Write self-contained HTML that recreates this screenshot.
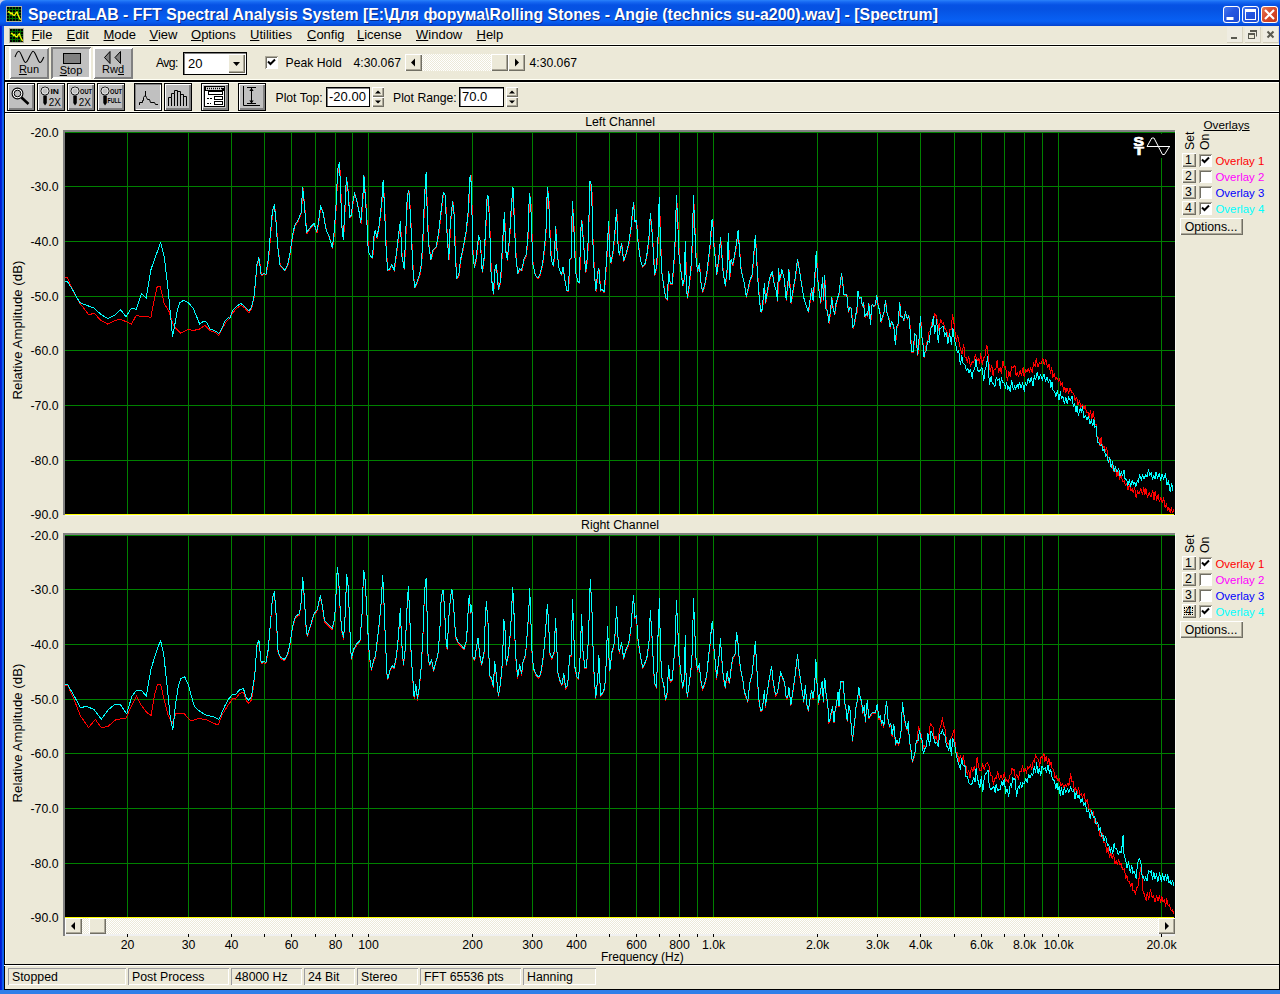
<!DOCTYPE html>
<html><head><meta charset="utf-8"><title>SpectraLAB</title><style>
html,body{margin:0;padding:0;}
body{width:1280px;height:994px;position:relative;overflow:hidden;background:#ECE9D8;font-family:"Liberation Sans",sans-serif;}
.a{position:absolute;box-sizing:border-box}
.t{position:absolute;white-space:nowrap;color:#000;font-size:12px;line-height:14px}
.ttl{color:#fff;font-weight:bold;font-size:15.85px;line-height:18px;text-shadow:1px 1px 0 #0a2a8a}
.m{font-size:13px;line-height:16px}
.tb{font-size:12.2px;line-height:15px}
.bl{font-size:11px;line-height:13px}
.ax{font-size:12.3px;line-height:14px}
#title{position:absolute;left:0;top:0;width:1280px;height:26px;background:linear-gradient(180deg,#2a82fa 0px,#1668f2 2px,#0652e4 5px,#0552e2 9px,#075cee 17px,#0860f4 21px,#0652e2 24px,#0440cc 26px)}
#lb{position:absolute;left:0;top:26px;width:4px;height:968px;background:linear-gradient(90deg,#0018d2 0,#0320d8 1.4px,#1162ec 2.6px,#0e60f0 4px)}
#rb{position:absolute;left:1279px;top:26px;width:1px;height:19px;background:#0a40d8}
#bb{position:absolute;left:0;top:990px;width:1280px;height:4px;background:#2f7fe8}
</style></head><body>
<div id="title"></div>
<div id="lb"></div><div id="rb"></div><div id="bb"></div>
<svg class="a" style="left:0;top:0" width="7" height="7"><path d="M0 0H6A6 6 0 0 0 0 6Z" fill="#c6ceee"/></svg>
<svg class="a" style="left:6px;top:6px" width="16" height="16" viewBox="0 0 16 16" shape-rendering="crispEdges"><rect width="16" height="16" fill="#b0b0a0"/><rect x="1" y="1" width="14" height="14" fill="#000"/><path d="M1 3.5H15M1 6.5H15M1 9.5H15M1 12.5H15M3.5 1V15M6.5 1V15M9.5 1V15M12.5 1V15" stroke="#006a00" stroke-width="1" fill="none"/><path d="M2 5.5L4 6.5L5 8L6 7L7 9L8.5 9.5L10 7L11 6L12 9L13.5 12L14.5 14" stroke="#f4f400" stroke-width="1.4" fill="none" shape-rendering="auto"/></svg>
<div class="t ttl" style="left:28px;top:6px;">SpectraLAB - FFT Spectral Analysis System [E:\Для форума\Rolling Stones - Angie (technics su-a200).wav] - [Spectrum]</div>
<div class="a" style="left:1223px;top:6px;width:17px;height:17px;border-radius:3.5px;background:linear-gradient(135deg,#4a7df0 0%,#2456e0 45%,#1c49d0 100%);box-shadow:inset 0 0 0 1px #fff;"><svg width="17" height="17" style="position:absolute;left:0;top:0"><rect x="3.5" y="11" width="7" height="3" fill="#fff"/></svg></div>
<div class="a" style="left:1242px;top:6px;width:17px;height:17px;border-radius:3.5px;background:linear-gradient(135deg,#4a7df0 0%,#2456e0 45%,#1c49d0 100%);box-shadow:inset 0 0 0 1px #fff;"><svg width="17" height="17" style="position:absolute;left:0;top:0"><rect x="3.5" y="3.5" width="10" height="10" fill="none" stroke="#fff" stroke-width="1"/><rect x="3" y="3" width="11" height="3" fill="#fff"/></svg></div>
<div class="a" style="left:1261px;top:6px;width:17px;height:17px;border-radius:3.5px;background:linear-gradient(135deg,#e8805a 0%,#d6482a 50%,#c03a1c 100%);box-shadow:inset 0 0 0 1px #fff;"><svg width="17" height="17" style="position:absolute;left:0;top:0"><path d="M4 4L13 13M13 4L4 13" stroke="#fff" stroke-width="2.2" fill="none"/></svg></div>
<div class="a" style="left:4px;top:26px;width:1275px;height:19px;background:#ECE9D8"></div>
<svg class="a" style="left:9px;top:28px" width="15" height="15" viewBox="0 0 16 16" shape-rendering="crispEdges"><rect width="16" height="16" fill="#b0b0a0"/><rect x="1" y="1" width="14" height="14" fill="#000"/><path d="M1 3.5H15M1 6.5H15M1 9.5H15M1 12.5H15M3.5 1V15M6.5 1V15M9.5 1V15M12.5 1V15" stroke="#006a00" stroke-width="1" fill="none"/><path d="M2 5.5L4 6.5L5 8L6 7L7 9L8.5 9.5L10 7L11 6L12 9L13.5 12L14.5 14" stroke="#f4f400" stroke-width="1.4" fill="none" shape-rendering="auto"/></svg>
<div class="t m" style="left:31.5px;top:27px;"><u>F</u>ile</div>
<div class="t m" style="left:66.5px;top:27px;"><u>E</u>dit</div>
<div class="t m" style="left:103.5px;top:27px;"><u>M</u>ode</div>
<div class="t m" style="left:149.5px;top:27px;"><u>V</u>iew</div>
<div class="t m" style="left:191px;top:27px;"><u>O</u>ptions</div>
<div class="t m" style="left:250px;top:27px;"><u>U</u>tilities</div>
<div class="t m" style="left:307px;top:27px;"><u>C</u>onfig</div>
<div class="t m" style="left:357px;top:27px;"><u>L</u>icense</div>
<div class="t m" style="left:416px;top:27px;"><u>W</u>indow</div>
<div class="t m" style="left:476.5px;top:27px;"><u>H</u>elp</div>
<div class="a" style="left:1227px;top:27px;width:15px;height:15px;background:#efede2;border-right:1px solid #d8d4c2;border-bottom:1px solid #d0ccb8;box-sizing:content-box"><svg width="15" height="15" style="position:absolute;left:0;top:0"><rect x="4" y="10" width="6" height="2" fill="#5a5a50"/></svg></div>
<div class="a" style="left:1245px;top:27px;width:15px;height:15px;background:#efede2;border-right:1px solid #d8d4c2;border-bottom:1px solid #d0ccb8;box-sizing:content-box"><svg width="15" height="15" style="position:absolute;left:0;top:0"><path d="M5.5 4.5H11.5V9.5" stroke="#5a5a50" stroke-width="1" fill="none"/><rect x="5" y="3" width="7" height="2" fill="#5a5a50"/><rect x="3.5" y="7.500" width="6" height="4" fill="#ece9d8" stroke="#5a5a50" stroke-width="1"/><rect x="3" y="6" width="7" height="2" fill="#5a5a50"/></svg></div>
<div class="a" style="left:1263px;top:27px;width:15px;height:15px;background:#efede2;border-right:1px solid #d8d4c2;border-bottom:1px solid #d0ccb8;box-sizing:content-box"><svg width="15" height="15" style="position:absolute;left:0;top:0"><path d="M4.5 4.5L10.5 10.500M10.5 4.5L4.500 10.5" stroke="#5a5a50" stroke-width="2" fill="none"/></svg></div>
<div class="a" style="left:4px;top:44px;width:1275px;height:1px;background:#fffff4"></div>
<div class="a" style="left:4px;top:46px;width:1275px;height:1px;background:#fffff4"></div>
<div class="a" style="left:4px;top:79px;width:1275px;height:1px;background:#fffff4"></div>
<div class="a" style="left:4px;top:82px;width:1275px;height:1px;background:#fffff4"></div>
<div class="a" style="left:4px;top:111px;width:1275px;height:1px;background:#fffff4"></div>
<div class="a" style="left:4px;top:113px;width:1275px;height:1px;background:#fffff4"></div>
<div class="a" style="left:5px;top:46px;width:1px;height:918px;background:#fffff4"></div>
<div class="a" style="left:4px;top:45px;width:1px;height:945px;background:#000"></div>
<div class="a" style="left:4px;top:45px;width:1276px;height:1px;background:#000"></div>
<div class="a" style="left:4px;top:80px;width:1276px;height:2px;background:#000"></div>
<div class="a" style="left:4px;top:112px;width:1276px;height:1px;background:#000"></div>
<div class="a" style="left:1279px;top:45px;width:1px;height:945px;background:#000"></div>
<div class="a" style="left:4px;top:964px;width:1276px;height:1px;background:#000"></div>
<div class="a" style="left:4px;top:965px;width:1275px;height:1px;background:#fff"></div>
<div class="a" style="left:4px;top:989px;width:1276px;height:1px;background:#000"></div>
<div class="a" style="left:9px;top:47px;width:40px;height:32px;background:#c0c0c0;box-shadow:inset 1px 1px 0 #fff, inset -1px -1px 0 #808080, inset 2px 2px 0 #fff, inset -2px -2px 0 #808080;"><svg width="40" height="31" style="position:absolute;left:0;top:0"><path d="M6 10C7.5 6 8.5 4.200 9.800 4.200C12 4.200 14.500 15.500 16.600 15.500C19 15.500 22 4.200 24.100 4.200C26.500 4.200 29 15.500 31 15.500C32.500 15.500 33.500 13 34.800 10" stroke="#000" stroke-width="1.1" fill="none"/></svg><div class="t bl" style="left:0;width:40px;top:16px;text-align:center"><u>R</u>un</div></div>
<div class="a" style="left:51px;top:47px;width:40px;height:32px;background:#c0c0c0;box-shadow:inset 1px 1px 0 #808080, inset -1px -1px 0 #fff, inset 2px 2px 0 #808080, inset -2px -2px 0 #fff;"><svg width="40" height="31" style="position:absolute;left:0;top:0"><rect x="12.5" y="6.500" width="17" height="10" fill="#808080" stroke="#000" stroke-width="1"/></svg><div class="t bl" style="left:0;width:40px;top:17px;text-align:center"><u>S</u>top</div></div>
<div class="a" style="left:93px;top:47px;width:40px;height:32px;background:#c0c0c0;box-shadow:inset 1px 1px 0 #fff, inset -1px -1px 0 #808080, inset 2px 2px 0 #fff, inset -2px -2px 0 #808080;"><svg width="40" height="31" style="position:absolute;left:0;top:0"><path d="M17 4.500L11.500 10.500L17 16.500ZM27.500 4.500L22 10.500L27.500 16.500Z" fill="#808080" stroke="#000" stroke-width="1"/></svg><div class="t bl" style="left:0;width:40px;top:16px;text-align:center">Rw<u>d</u></div></div>
<div class="t tb" style="left:156px;top:56px;letter-spacing:-0.6px">Avg:</div>
<div class="a" style="left:183px;top:52px;width:64px;height:23px;background:#fff;border:1px solid #000;box-sizing:border-box;box-shadow:inset 1px 1px 0 #808080"></div>
<div class="t tb" style="left:188px;top:56px;font-size:13px">20</div>
<div class="a" style="left:228px;top:54px;width:17px;height:19px;background:#ECE9D8;box-shadow:inset 1px 1px 0 #fff, inset -1px -1px 0 #6d6a5a, inset -2px -2px 0 #aca899"><svg width="17" height="19" style="position:absolute;left:0;top:0"><path d="M5 8H12L8.500 12Z" fill="#000"/></svg></div>
<div class="a" style="left:265px;top:56px;width:13px;height:13px;background:#fff;box-shadow:inset 1px 1px 0 #aca899, inset -1px -1px 0 #fff, inset 2px 2px 0 #716f64, inset -2px -2px 0 #fff"><svg width="13" height="13" style="position:absolute;left:0;top:0"><path d="M3 5.500L5.500 8L10 3.500" stroke="#000" stroke-width="2" fill="none"/></svg></div>
<div class="t tb" style="left:285.5px;top:56px;">Peak Hold</div>
<div class="t tb" style="left:353.5px;top:56px;">4:30.067</div>
<div class="t tb" style="left:529.5px;top:56px;">4:30.067</div>
<div class="a" style="left:422px;top:54px;width:86px;height:17px;background:repeating-conic-gradient(#ffffff 0% 25%, #ece9d8 0% 50%) 0 0/2px 2px"></div>
<div class="a" style="left:405px;top:54px;width:17px;height:17px;background:#ECE9D8;box-shadow:inset 1px 1px 0 #fff, inset -1px -1px 0 #716f64, inset -2px -2px 0 #aca899"><svg width="17" height="17" style="position:absolute;left:0;top:0"><path d="M10.0 4.5V12.5L6.0 8.5Z" fill="#000"/></svg></div>
<div class="a" style="left:491px;top:54px;width:17px;height:17px;background:#ECE9D8;box-shadow:inset 1px 1px 0 #fff, inset -1px -1px 0 #716f64, inset -2px -2px 0 #aca899"></div>
<div class="a" style="left:508px;top:54px;width:17px;height:17px;background:#ECE9D8;box-shadow:inset 1px 1px 0 #fff, inset -1px -1px 0 #716f64, inset -2px -2px 0 #aca899"><svg width="17" height="17" style="position:absolute;left:0;top:0"><path d="M7.0 4.5V12.5L11.0 8.5Z" fill="#000"/></svg></div>
<div class="a" style="left:7px;top:83px;width:28px;height:28px;background:#000"></div>
<div class="a" style="left:8px;top:84px;width:26px;height:26px;background:#c0c0c0;box-shadow:inset 1px 1px 0 #fff, inset -1px -1px 0 #808080, inset -2px -2px 0 #808080;"><svg width="26" height="26" style="position:absolute;left:0;top:0"><circle cx="9.5" cy="9.500" r="5.4" fill="#fff" stroke="#000" stroke-width="1.1"/><circle cx="9.500" cy="9.5" r="3.3" fill="#c0c0c0" stroke="#000" stroke-width="1"/><path d="M13.500 13.500L20.500 20" stroke="#000" stroke-width="2.6" fill="none"/></svg></div>
<div class="a" style="left:37px;top:83px;width:28px;height:28px;background:#000"></div>
<div class="a" style="left:38px;top:84px;width:26px;height:26px;background:#c0c0c0;box-shadow:inset 1px 1px 0 #fff, inset -1px -1px 0 #808080, inset -2px -2px 0 #808080;"><svg width="26" height="26" style="position:absolute;left:0;top:0"><circle cx="7" cy="7" r="4" fill="#c0c0c0" stroke="#000" stroke-width="1"/><circle cx="7" cy="7" r="3.2" fill="none" stroke="#fff" stroke-width="0.7"/><path d="M5.300 11.500H8.800V19L7 21.500L5.300 19Z" fill="#000"/><text x="12.5" y="10" font-family="Liberation Sans, sans-serif" font-weight="bold" font-size="6.5" fill="#000" textLength="8.5" lengthAdjust="spacingAndGlyphs">IN</text><text x="10.8" y="21.5" font-family="Liberation Sans, sans-serif" font-size="11"  fill="#000" textLength="12" lengthAdjust="spacingAndGlyphs">2X</text></svg></div>
<div class="a" style="left:67px;top:83px;width:28px;height:28px;background:#000"></div>
<div class="a" style="left:68px;top:84px;width:26px;height:26px;background:#c0c0c0;box-shadow:inset 1px 1px 0 #fff, inset -1px -1px 0 #808080, inset -2px -2px 0 #808080;"><svg width="26" height="26" style="position:absolute;left:0;top:0"><circle cx="7" cy="7" r="4" fill="#c0c0c0" stroke="#000" stroke-width="1"/><circle cx="7" cy="7" r="3.2" fill="none" stroke="#fff" stroke-width="0.7"/><path d="M5.300 11.500H8.800V19L7 21.500L5.300 19Z" fill="#000"/><text x="12" y="10" font-family="Liberation Sans, sans-serif" font-weight="bold" font-size="6.5" fill="#000" textLength="12" lengthAdjust="spacingAndGlyphs">OUT</text><text x="10.8" y="21.5" font-family="Liberation Sans, sans-serif" font-size="11"  fill="#000" textLength="12" lengthAdjust="spacingAndGlyphs">2X</text></svg></div>
<div class="a" style="left:97px;top:83px;width:28px;height:28px;background:#000"></div>
<div class="a" style="left:98px;top:84px;width:26px;height:26px;background:#c0c0c0;box-shadow:inset 1px 1px 0 #fff, inset -1px -1px 0 #808080, inset -2px -2px 0 #808080;"><svg width="26" height="26" style="position:absolute;left:0;top:0"><circle cx="7" cy="7" r="4" fill="#c0c0c0" stroke="#000" stroke-width="1"/><circle cx="7" cy="7" r="3.2" fill="none" stroke="#fff" stroke-width="0.7"/><path d="M5.300 11.500H8.800V19L7 21.500L5.300 19Z" fill="#000"/><text x="12" y="10" font-family="Liberation Sans, sans-serif" font-weight="bold" font-size="6.5" fill="#000" textLength="12" lengthAdjust="spacingAndGlyphs">OUT</text><text x="9.5" y="18.8" font-family="Liberation Sans, sans-serif" font-size="7" font-weight='bold' fill="#000" textLength="13.5" lengthAdjust="spacingAndGlyphs">FULL</text></svg></div>
<div class="a" style="left:134px;top:83px;width:28px;height:28px;background:#000"></div>
<div class="a" style="left:135px;top:84px;width:26px;height:26px;background:#c0c0c0;box-shadow:inset 1px 1px 0 #808080, inset -1px -1px 0 #fff;"><svg width="26" height="26" style="position:absolute;left:0;top:0"><path d="M4.500 21V18.500H7.500V16.500H8.500V13.500L10 11.500M10.500 7V12.500M10.500 11.500L11.500 13.500L12.500 15.500H14.500L15.500 18.500H19.500L20.500 20.500H23" stroke="#000" stroke-width="1" fill="none"/></svg></div>
<div class="a" style="left:164px;top:83px;width:28px;height:28px;background:#000"></div>
<div class="a" style="left:165px;top:84px;width:26px;height:26px;background:#c0c0c0;box-shadow:inset 1px 1px 0 #fff, inset -1px -1px 0 #808080, inset -2px -2px 0 #808080;"><svg width="26" height="26" style="position:absolute;left:0;top:0"><path d="M3.500 22V13.500H6.500V22M6.500 13.500V9.500H9.500V22M9.500 9.500V6.500H12.500V22M12.500 7.500H15.500V22M15.500 10.500H18.500V22M18.500 12.500H21.500V22" stroke="#000" stroke-width="1" fill="none"/></svg></div>
<div class="a" style="left:201px;top:83px;width:28px;height:28px;background:#000"></div>
<div class="a" style="left:202px;top:84px;width:26px;height:26px;background:#c0c0c0;box-shadow:inset 1px 1px 0 #fff, inset -1px -1px 0 #808080, inset -2px -2px 0 #808080;"><svg width="26" height="26" style="position:absolute;left:0;top:0"><rect x="2.5" y="2.500" width="20" height="20" fill="#fff" stroke="#000" stroke-width="1"/><path d="M3 6.500H22" stroke="#000" stroke-width="1"/><rect x="3" y="3" width="19" height="3" fill="#d8d8d8"/><path d="M5 4.500H20" stroke="#000" stroke-width="1.4" stroke-dasharray="1 1"/><rect x="3" y="3" width="1" height="3" fill="#000"/><rect x="20" y="4" width="2" height="2" fill="#000"/><rect x="6.500" y="7.500" width="14" height="3" fill="#fff" stroke="#000"/><rect x="12.5" y="12.500" width="8" height="3" fill="#fff" stroke="#000"/><rect x="12.500" y="17.500" width="8" height="3" fill="#fff" stroke="#000"/><path d="M5 14.500H10M5 19.500H9" stroke="#000" stroke-width="1" stroke-dasharray="2 1"/></svg></div>
<div class="a" style="left:238px;top:83px;width:28px;height:28px;background:#000"></div>
<div class="a" style="left:239px;top:84px;width:26px;height:26px;background:#c0c0c0;box-shadow:inset 1px 1px 0 #fff, inset -1px -1px 0 #808080, inset -2px -2px 0 #808080;"><svg width="26" height="26" style="position:absolute;left:0;top:0"><path d="M4.500 2V21.500H21" stroke="#000" stroke-width="1" fill="none"/><path d="M8 3.500H17M8 19.500H17M12.500 4V19" stroke="#000" stroke-width="1" fill="none"/><path d="M10.300 7L12.500 4L14.700 7ZM10.300 16.500L12.500 19.500L14.700 16.500Z" fill="#000"/></svg></div>
<div class="t tb" style="left:275.5px;top:91px;">Plot Top:</div>
<div class="t tb" style="left:393px;top:91px;">Plot Range:</div>
<div class="a" style="left:326px;top:87px;width:44px;height:20px;background:#fff;border:1px solid #000;box-sizing:border-box;box-shadow:inset 1px 1px 0 #808080"><div class="t tb" style="left:2px;top:1px;font-size:13px">-20.00</div></div>
<div class="a" style="left:459px;top:87px;width:45px;height:20px;background:#fff;border:1px solid #000;box-sizing:border-box;box-shadow:inset 1px 1px 0 #808080"><div class="t tb" style="left:2px;top:1px;font-size:13px">70.0</div></div>
<div class="a" style="left:372px;top:87px;width:12px;height:10px;background:#ECE9D8;box-shadow:inset 1px 1px 0 #fff, inset -1px -1px 0 #716f64, inset -2px -2px 0 #aca899"><svg width="12" height="10" style="position:absolute;left:0;top:0"><path d="M3 6.500H9L6 3.500Z" fill="#000"/></svg></div>
<div class="a" style="left:372px;top:97px;width:12px;height:10px;background:#ECE9D8;box-shadow:inset 1px 1px 0 #fff, inset -1px -1px 0 #716f64, inset -2px -2px 0 #aca899"><svg width="12" height="10" style="position:absolute;left:0;top:0"><path d="M3 3.500H9L6 6.500Z" fill="#000"/></svg></div>
<div class="a" style="left:506px;top:87px;width:12px;height:10px;background:#ECE9D8;box-shadow:inset 1px 1px 0 #fff, inset -1px -1px 0 #716f64, inset -2px -2px 0 #aca899"><svg width="12" height="10" style="position:absolute;left:0;top:0"><path d="M3 6.500H9L6 3.500Z" fill="#000"/></svg></div>
<div class="a" style="left:506px;top:97px;width:12px;height:10px;background:#ECE9D8;box-shadow:inset 1px 1px 0 #fff, inset -1px -1px 0 #716f64, inset -2px -2px 0 #aca899"><svg width="12" height="10" style="position:absolute;left:0;top:0"><path d="M3 3.500H9L6 6.500Z" fill="#000"/></svg></div>
<div class="a" style="left:63px;top:130px;width:1112px;height:2px;background:#808080"></div>
<div class="a" style="left:63px;top:130px;width:2px;height:385px;background:#808080"></div>
<div class="a" style="left:1175px;top:131px;width:1px;height:384px;background:#f8f8f0"></div>
<div class="a" style="left:65px;top:515px;width:1110px;height:1px;background:#f4f4f4"></div>
<svg class="a" style="left:65px;top:132px" width="1110" height="383" viewBox="65 132 1110 383" shape-rendering="crispEdges"><rect x="65" y="132" width="1110" height="383" fill="#000"/><path d="M127.5 132V514M188.5 132V514M231.5 132V514M264.5 132V514M291.5 132V514M315.5 132V514M335.5 132V514M352.5 132V514M368.5 132V514M472.5 132V514M532.5 132V514M576.5 132V514M609.5 132V514M636.5 132V514M659.5 132V514M679.5 132V514M697.5 132V514M713.5 132V514M817.5 132V514M877.5 132V514M920.5 132V514M954.5 132V514M981.5 132V514M1004.5 132V514M1024.5 132V514M1042.5 132V514M1058.5 132V514M1161.5 132V514M65 132.5H1175M65 186.5H1175M65 241.5H1175M65 296.5H1175M65 350.5H1175M65 405.5H1175M65 460.5H1175" stroke="#008000" stroke-width="1" fill="none"/><path d="M65.0 277.3L67.3 277.3L72.8 290.2L79.8 303.4L83.8 308.1L88.4 314.4L94.7 313.6L100.9 320.6L108.0 324.2L115.0 320.3L120.5 319.4L127.5 322.2L131.4 324.2L136.1 315.6L141.6 316.4L150.9 317.2L154.1 300.3L157.2 286.6L160.3 286.6L164.2 303.4L168.9 311.2L172.8 323.8L175.9 328.4L180.6 333.1L188.4 329.2L193.1 330.5L199.4 329.2L204.8 325.3L210.3 330.8L215.0 332.3L218.9 335.5L222.0 329.2L225.9 322.2L229.1 319.1L232.2 313.6L236.1 308.9L240.8 305.3L244.7 307.8L249.1 313.1L251.7 308.1L254.1 297.2L255.9 278.4L256.9 266.4L259.2 258.6L261.6 275.8L263.9 274.2L266.2 275.0L268.6 260.2L270.9 232.1L272.8 211.0L274.7 205.5L276.4 224.2L278.0 247.7L280.3 265.6L285.0 271.1L288.1 264.9L290.5 252.4L292.8 236.0L295.1 225.8L298.3 221.1L301.4 213.3L303.0 188.3L304.5 203.9L306.9 233.6L310.0 228.9L314.4 224.2L317.0 232.8L318.6 224.2L320.9 206.3L323.3 213.3L326.4 230.5L329.5 237.5L332.6 248.5L334.2 235.2L336.2 208.6L337.5 180.5L338.4 168.0L339.7 163.3L340.9 189.9L342.0 225.8L343.6 239.9L345.1 210.2L346.7 178.1L348.3 191.4L350.1 218.0L351.7 215.6L353.0 203.9L354.8 193.8L356.9 200.8L359.2 211.7L361.1 223.5L363.1 197.7L364.2 176.6L365.5 196.1L367.0 219.6L368.6 252.4L370.9 257.1L372.8 258.6L374.4 235.2L375.6 231.3L377.2 238.3L379.5 225.8L381.9 203.9L383.4 181.3L384.7 205.5L386.2 244.6L387.8 271.1L390.0 269.6L392.0 264.9L394.4 271.1L396.7 253.9L399.1 233.6L400.6 222.7L402.2 257.1L404.5 269.6L406.1 232.1L407.6 196.1L409.2 191.4L410.8 218.0L412.3 250.8L413.4 272.7L415.0 288.3L417.8 282.1L420.1 274.2L421.7 264.9L423.3 235.2L424.8 197.7L426.4 173.5L427.2 203.9L428.7 243.0L431.1 260.2L433.4 250.8L436.6 247.7L438.9 233.6L441.2 213.3L443.6 193.0L445.6 196.1L446.7 224.2L449.1 260.2L450.6 222.7L453.0 202.4L454.5 216.4L455.5 253.9L457.0 278.9L459.1 275.8L460.9 260.2L463.3 249.2L466.4 232.1L468.7 210.2L470.0 178.9L471.1 175.8L472.2 210.2L473.1 253.9L474.7 268.0L476.6 258.6L478.9 236.7L480.5 241.4L482.5 272.7L484.4 258.6L486.2 222.7L487.5 196.1L488.7 197.7L490.3 238.3L491.4 275.8L493.7 294.6L495.0 271.1L496.6 264.9L498.7 289.9L500.8 282.1L502.8 244.6L504.7 213.3L505.9 250.8L507.5 260.2L509.7 239.9L511.7 205.5L513.3 188.3L514.8 228.9L516.4 260.2L518.0 274.2L520.0 269.6L521.9 271.1L524.2 260.2L526.5 255.5L528.1 238.3L529.7 194.6L530.9 200.8L532.0 233.6L533.1 264.9L535.6 275.8L538.3 278.9L540.6 274.2L543.0 263.3L545.0 246.1L546.5 227.4L547.6 188.3L548.9 197.7L550.3 238.3L551.5 260.2L553.4 266.4L554.7 257.1L555.9 227.4L557.2 250.8L559.0 268.0L561.7 275.8L563.3 268.0L565.3 282.1L567.2 291.4L568.7 291.4L570.0 260.2L571.5 258.6L572.6 202.4L574.2 228.9L575.8 272.7L578.1 282.1L579.7 283.6L580.9 232.1L582.0 221.1L584.0 247.7L585.9 272.7L587.8 257.1L589.0 222.7L590.3 182.1L591.9 186.7L593.0 238.3L594.5 272.7L596.1 291.4L598.1 272.7L599.2 269.6L600.8 291.4L602.3 289.9L604.4 293.0L606.2 269.6L607.8 244.6L608.9 222.7L610.1 257.1L611.2 263.3L613.3 252.4L615.6 227.4L616.9 210.2L618.0 241.4L619.5 255.5L621.9 244.6L623.9 261.7L626.5 253.9L628.9 244.6L631.2 228.9L632.8 211.7L633.9 203.1L635.1 222.7L636.7 221.1L638.3 243.0L640.6 260.2L642.5 266.4L642.8 267.4L645.5 264.2L647.5 253.3L649.4 236.1L650.6 214.2L652.2 231.4L653.7 253.3L654.8 275.2L656.9 267.4L658.4 236.1L659.5 197.8L660.6 237.7L661.9 272.1L664.2 287.7L665.8 298.6L667.6 300.2L668.9 272.1L670.5 284.6L672.5 284.6L674.0 264.2L675.6 237.7L676.7 196.3L678.0 222.1L679.4 258.0L681.4 273.6L683.0 286.1L684.5 279.9L685.6 242.4L686.5 284.6L687.6 298.6L689.2 287.7L691.2 268.9L692.8 237.7L693.7 196.3L695.1 229.9L696.2 258.0L697.8 272.1L699.7 264.2L700.9 281.4L702.8 292.4L704.8 286.1L706.9 275.2L708.7 259.6L710.6 243.9L711.9 222.1L713.0 220.5L714.2 247.1L715.8 261.1L716.9 275.2L718.9 261.1L720.8 238.5L722.0 254.9L723.6 275.2L725.6 286.1L727.5 268.9L728.6 233.8L729.8 279.9L731.4 259.6L733.0 265.8L735.3 253.3L737.2 240.8L738.4 230.6L739.7 250.2L741.2 268.9L743.1 278.3L744.7 284.6L746.5 297.1L748.1 290.8L750.1 281.4L752.5 275.2L754.4 250.2L755.6 236.1L756.9 259.6L758.4 284.6L759.5 298.6L761.1 312.7L762.6 309.6L764.7 284.6L765.8 303.3L767.8 290.8L769.7 279.9L772.5 272.1L774.4 284.6L776.7 292.4L777.8 301.7L778.7 268.9L779.8 281.4L782.2 270.5L784.5 279.9L786.5 300.2L788.1 284.6L789.2 270.5L791.2 303.3L793.1 292.4L795.5 278.3L797.8 260.3L799.4 268.9L801.7 284.6L804.0 298.6L806.4 306.4L808.7 312.7L810.6 298.6L811.9 289.2L813.4 301.7L815.0 278.3L816.5 252.5L817.8 278.3L819.4 292.4L820.9 303.3L822.8 278.3L823.9 300.2L824.8 276.0L826.2 303.3L826.3 310.2L827.7 311.1L829.1 323.6L830.6 312.8L832.0 298.3L833.6 311.0L834.9 314.9L836.5 302.9L837.6 299.8L839.3 294.0L840.8 281.4L841.8 274.2L842.9 282.3L844.1 295.2L845.4 295.1L847.1 295.0L848.6 312.6L850.2 308.0L851.4 308.6L853.2 328.5L854.7 324.6L855.9 314.6L857.0 313.4L858.3 292.2L859.6 299.0L861.3 297.8L862.5 306.6L863.8 303.1L865.2 317.4L866.7 314.5L867.9 316.5L869.1 304.3L870.7 325.0L871.9 306.3L873.0 305.0L874.1 307.0L875.5 305.7L877.1 296.5L878.6 307.4L879.9 311.0L881.1 322.4L882.8 317.3L884.5 311.8L885.8 301.0L887.3 314.0L889.1 318.7L890.3 328.2L891.6 322.7L892.6 323.4L894.1 327.4L895.6 345.0L897.0 327.8L898.3 325.1L900.0 303.6L901.2 317.7L902.8 317.6L904.0 321.0L905.7 312.7L907.5 319.2L909.0 316.4L910.0 324.8L911.8 352.7L913.4 352.1L915.0 334.5L916.3 335.5L917.8 355.5L919.0 345.0L920.7 317.4L921.9 336.2L923.1 343.1L924.3 357.7L925.0 352.9L926.5 342.8L927.7 342.5L929.1 331.2L930.4 331.7L931.7 322.9L932.9 326.9L934.5 313.9L936.3 316.0L937.5 320.5L938.9 330.5L940.5 319.2L942.2 323.5L943.4 322.7L945.2 329.1L946.8 330.9L948.2 339.3L949.9 329.7L951.1 330.1L952.5 314.9L953.6 320.1L955.1 332.4L956.3 341.3L957.7 335.2L959.0 342.1L960.6 350.3L962.0 353.9L963.7 344.5L965.1 357.7L966.2 357.8L967.3 362.1L968.7 356.4L970.5 366.4L972.1 361.8L973.6 363.0L975.4 354.6L977.0 360.9L978.4 358.4L979.5 363.8L980.7 353.6L982.3 364.4L983.6 357.5L984.8 357.5L986.6 345.0L987.6 348.6L988.7 362.0L990.3 371.5L991.7 365.2L993.1 375.4L994.2 369.0L995.8 369.2L997.1 360.3L998.5 372.4L1000.2 367.8L1001.3 373.4L1002.9 361.0L1004.5 367.7L1005.6 366.9L1007.3 380.6L1008.9 371.6L1010.3 376.7L1011.5 366.9L1013.2 367.6L1014.9 365.6L1016.1 376.2L1017.1 372.3L1018.6 376.7L1020.2 370.6L1021.5 375.8L1023.1 367.5L1024.1 376.4L1025.8 369.9L1027.0 371.6L1028.1 368.3L1029.3 372.3L1030.6 367.7L1032.3 372.4L1033.5 362.6L1035.1 366.5L1036.2 358.5L1037.9 367.2L1039.6 362.9L1041.4 363.6L1042.7 358.3L1044.2 364.3L1045.9 359.2L1047.6 367.5L1049.0 364.3L1050.5 373.3L1051.7 367.1L1052.7 377.2L1054.3 373.6L1055.7 379.4L1056.9 377.4L1058.5 381.6L1059.6 378.9L1060.9 385.4L1062.3 382.7L1063.7 391.2L1064.8 387.7L1066.0 392.4L1067.0 388.4L1068.7 393.1L1070.1 388.2L1071.9 392.8L1073.7 393.1L1075.2 400.5L1076.7 397.0L1077.8 405.0L1079.6 400.6L1080.9 407.5L1082.6 404.6L1084.0 409.0L1085.1 405.7L1086.5 412.5L1088.1 411.9L1089.3 417.1L1090.5 410.9L1091.7 419.1L1093.3 411.8L1095.0 424.4L1096.0 424.0L1097.1 436.8L1098.9 437.9L1099.9 445.8L1101.1 437.3L1102.5 448.1L1104.2 445.9L1105.5 451.8L1106.7 447.7L1107.8 457.3L1109.0 458.2L1110.6 464.5L1112.1 464.4L1113.7 471.8L1115.5 469.6L1117.0 476.4L1118.3 471.3L1119.6 479.5L1121.2 474.9L1122.5 481.8L1124.3 480.7L1125.6 486.0L1126.9 483.2L1128.0 489.8L1129.6 484.5L1131.0 490.8L1132.2 488.7L1133.3 492.8L1134.6 487.7L1136.2 498.0L1137.6 490.8L1139.1 494.0L1140.9 488.6L1142.5 494.8L1143.8 487.8L1144.9 494.8L1145.9 488.7L1147.5 497.8L1149.2 492.8L1150.9 497.2L1152.7 490.1L1154.0 499.6L1155.2 491.0L1156.7 500.7L1158.2 494.6L1159.4 502.0L1160.8 497.3L1162.4 502.8L1163.7 497.9L1165.1 507.3L1166.5 504.0L1167.8 510.4L1168.9 507.7L1170.2 513.0L1171.3 507.7L1172.6 513.0L1173.7 509.3" stroke="#ff0000" stroke-width="1" fill="none" stroke-linejoin="round"/><path d="M65.0 281.2L67.3 281.2L72.8 290.2L79.8 302.7L85.3 304.7L93.9 308.1L100.9 314.4L108.0 318.6L115.0 315.2L120.5 309.7L125.9 316.7L131.4 308.1L136.1 309.4L141.6 293.3L146.2 298.3L150.9 269.8L154.1 260.5L160.6 242.5L164.2 256.6L168.1 289.4L171.2 322.2L172.5 336.7L174.4 326.9L177.5 309.7L179.8 302.7L183.8 300.3L188.4 302.7L193.1 308.1L197.0 317.5L199.7 324.2L203.3 321.4L206.4 322.2L210.3 329.2L215.0 330.8L218.9 333.4L221.2 330.0L225.2 320.6L228.3 317.5L229.8 318.3L232.2 311.2L236.1 306.6L240.8 303.4L244.7 306.6L249.1 311.2L251.7 306.6L254.1 295.6L255.9 276.9L256.6 265.6L258.9 257.8L261.2 275.0L263.6 273.4L265.9 274.2L268.3 259.4L270.6 231.2L272.5 210.2L274.4 204.7L276.1 223.4L277.7 246.9L280.0 264.8L284.7 270.3L287.8 264.1L290.2 251.6L292.5 235.2L294.8 225.0L298.0 220.3L301.1 212.5L302.7 187.5L304.2 203.1L306.6 232.8L309.7 228.1L314.1 223.4L316.7 232.0L318.3 223.4L320.6 205.5L323.0 212.5L326.1 229.7L329.2 236.7L332.3 247.7L333.9 234.4L335.9 207.8L337.2 179.7L338.1 167.2L339.4 162.5L340.6 189.1L341.7 225.0L343.3 239.1L344.8 209.4L346.4 177.3L348.0 190.6L349.8 217.2L351.4 214.8L352.7 203.1L354.5 193.0L356.6 200.0L358.9 210.9L360.8 222.7L362.8 196.9L363.9 175.8L365.2 195.3L366.7 218.8L368.3 251.6L370.6 256.2L372.5 257.8L374.1 234.4L375.3 230.5L376.9 237.5L379.2 225.0L381.6 203.1L383.1 180.5L384.4 204.7L385.9 243.8L387.5 270.3L389.7 268.8L391.7 264.1L394.1 270.3L396.4 253.1L398.8 232.8L400.3 221.9L401.9 256.2L404.2 268.8L405.8 231.2L407.3 195.3L408.9 190.6L410.5 217.2L412.0 250.0L413.1 271.9L414.7 287.5L417.5 281.2L419.8 273.4L421.4 264.1L423.0 234.4L424.5 196.9L426.1 172.7L426.9 203.1L428.4 242.2L430.8 259.4L433.1 250.0L436.2 246.9L438.6 232.8L440.9 212.5L443.3 192.2L445.3 195.3L446.4 223.4L448.8 259.4L450.3 221.9L452.7 201.6L454.2 215.6L455.2 253.1L456.7 278.1L458.8 275.0L460.6 259.4L463.0 248.4L466.1 231.2L468.4 209.4L469.7 178.1L470.8 175.0L471.9 209.4L472.8 253.1L474.4 267.2L476.2 257.8L478.6 235.9L480.2 240.6L482.2 271.9L484.1 257.8L485.9 221.9L487.2 195.3L488.4 196.9L490.0 237.5L491.1 275.0L493.4 293.8L494.7 270.3L496.2 264.1L498.4 289.1L500.5 281.2L502.5 243.8L504.4 212.5L505.6 250.0L507.2 259.4L509.4 239.1L511.4 204.7L513.0 187.5L514.5 228.1L516.1 259.4L517.7 273.4L519.7 268.8L521.6 270.3L523.9 259.4L526.2 254.7L527.8 237.5L529.4 193.8L530.6 200.0L531.7 232.8L532.8 264.1L535.3 275.0L538.0 278.1L540.3 273.4L542.7 262.5L544.7 245.3L546.2 226.6L547.3 187.5L548.6 196.9L550.0 237.5L551.2 259.4L553.1 265.6L554.4 256.2L555.6 226.6L556.9 250.0L558.8 267.2L561.4 275.0L563.0 267.2L565.0 281.2L566.9 290.6L568.4 290.6L569.7 259.4L571.2 257.8L572.3 201.6L573.9 228.1L575.5 271.9L577.8 281.2L579.4 282.8L580.6 231.2L581.7 220.3L583.8 246.9L585.6 271.9L587.5 256.2L588.8 221.9L590.0 181.2L591.6 185.9L592.7 237.5L594.2 271.9L595.8 290.6L597.8 271.9L598.9 268.8L600.5 290.6L602.0 289.1L604.1 292.2L605.9 268.8L607.5 243.8L608.6 221.9L609.8 256.2L610.9 262.5L613.0 251.6L615.3 226.6L616.6 209.4L617.7 240.6L619.2 254.7L621.6 243.8L623.6 260.9L626.2 253.1L628.6 243.8L630.9 228.1L632.5 210.9L633.6 202.3L634.8 221.9L636.4 220.3L638.0 242.2L640.3 259.4L642.2 265.6L642.5 266.6L645.2 263.4L647.2 252.5L649.1 235.3L650.3 213.4L651.9 230.6L653.4 252.5L654.5 274.4L656.6 266.6L658.1 235.3L659.2 197.0L660.3 236.9L661.6 271.2L663.9 286.9L665.5 297.8L667.3 299.4L668.6 271.2L670.2 283.8L672.2 283.8L673.8 263.4L675.3 236.9L676.4 195.5L677.7 221.2L679.1 257.2L681.1 272.8L682.7 285.3L684.2 279.1L685.3 241.6L686.2 283.8L687.3 297.8L688.9 286.9L690.9 268.1L692.5 236.9L693.4 195.5L694.8 229.1L695.9 257.2L697.5 271.2L699.4 263.4L700.6 280.6L702.5 291.6L704.5 285.3L706.6 274.4L708.4 258.8L710.3 243.1L711.6 221.2L712.7 219.7L713.9 246.2L715.5 260.3L716.6 274.4L718.6 260.3L720.5 237.7L721.7 254.1L723.3 274.4L725.3 285.3L727.2 268.1L728.3 233.0L729.5 279.1L731.1 258.8L732.7 265.0L735.0 252.5L736.9 240.0L738.1 229.8L739.4 249.4L740.9 268.1L742.8 277.5L744.4 283.8L746.2 296.2L747.8 290.0L749.8 280.6L752.2 274.4L754.1 249.4L755.3 235.3L756.6 258.8L758.1 283.8L759.2 297.8L760.8 311.9L762.3 308.8L764.4 283.8L765.5 302.5L767.5 290.0L769.4 279.1L772.2 271.2L774.1 283.8L776.4 291.6L777.5 300.9L778.4 268.1L779.5 280.6L781.9 269.7L784.2 279.1L786.2 299.4L787.8 283.8L788.9 269.7L790.9 302.5L792.8 291.6L795.2 277.5L797.5 259.5L799.1 268.1L801.4 283.8L803.8 297.8L806.1 305.6L808.4 311.9L810.3 297.8L811.6 288.4L813.1 300.9L814.7 277.5L816.2 251.7L817.5 277.5L819.1 291.6L820.6 302.5L822.5 277.5L823.6 299.4L824.5 275.2L825.9 302.5L826.0 309.4L827.4 310.3L828.8 322.8L830.3 312.0L831.7 297.5L833.3 310.2L834.6 314.1L836.2 302.1L837.3 299.0L839.0 293.2L840.5 280.6L841.5 273.4L842.6 281.5L843.8 294.4L845.1 294.3L846.8 294.2L848.3 311.8L849.9 307.2L851.1 307.8L852.9 327.7L854.4 323.8L855.6 313.8L856.7 312.6L858.0 291.4L859.3 298.2L861.0 297.0L862.2 305.8L863.5 302.3L864.9 316.6L866.4 313.7L867.6 315.7L868.8 303.5L870.4 324.2L871.6 305.5L872.7 304.2L873.8 306.2L875.2 304.9L876.8 295.7L878.3 306.6L879.6 310.2L880.8 321.6L882.5 316.5L884.2 311.0L885.5 300.2L887.0 313.2L888.8 317.9L890.0 327.4L891.3 321.9L892.3 322.6L893.8 326.6L895.3 344.2L896.7 327.0L898.0 324.3L899.7 302.8L900.9 316.9L902.5 316.8L903.7 320.2L905.4 311.9L907.2 318.4L908.7 315.6L909.7 324.0L911.5 351.9L913.1 351.3L914.7 333.7L916.0 334.7L917.5 354.7L918.7 344.2L920.4 316.6L921.6 335.4L922.8 342.3L924.0 356.9L925.1 351.5L926.4 350.8L927.5 341.2L929.2 342.3L930.7 328.9L932.2 326.1L933.2 316.9L934.9 333.4L936.7 319.6L938.2 342.3L939.8 328.7L941.6 327.9L943.0 325.7L944.7 336.1L946.3 332.4L948.0 343.5L949.6 333.3L951.3 344.2L952.9 328.5L954.4 340.2L955.7 344.2L957.2 352.4L958.7 350.5L960.4 364.8L961.7 355.9L963.2 363.6L964.8 364.6L966.4 370.7L967.9 368.2L969.1 373.2L970.5 369.2L972.2 378.4L973.2 370.8L974.8 368.7L975.9 359.2L977.4 369.7L979.2 372.0L980.7 369.3L982.0 367.5L983.8 380.4L985.1 368.9L986.3 366.0L987.7 356.6L989.4 384.7L991.2 376.7L992.3 383.6L993.5 383.7L994.9 386.4L996.2 377.4L997.9 380.3L999.3 378.3L1000.3 388.6L1001.3 377.8L1002.8 382.5L1004.4 383.0L1005.5 388.1L1006.6 382.3L1007.7 389.7L1008.8 386.4L1010.1 391.7L1011.7 380.5L1013.4 390.0L1014.6 385.5L1015.7 389.4L1017.1 384.6L1018.3 388.1L1019.5 382.1L1020.9 387.9L1022.6 383.0L1024.2 391.2L1025.3 382.4L1026.8 385.2L1028.2 378.5L1029.9 382.7L1031.4 377.1L1033.0 386.1L1034.4 375.5L1035.6 379.9L1037.2 372.7L1038.8 379.6L1040.5 374.8L1042.3 380.2L1043.9 373.9L1045.6 381.2L1046.9 377.0L1048.3 382.2L1049.9 379.4L1050.9 387.4L1052.0 381.7L1053.1 390.3L1054.7 391.5L1055.9 396.3L1057.4 390.3L1059.0 400.1L1060.4 391.7L1061.4 398.7L1062.9 396.8L1064.4 403.1L1065.9 397.1L1067.3 404.0L1068.6 396.8L1070.3 400.6L1072.0 396.4L1073.4 406.9L1074.6 403.8L1076.0 412.2L1077.0 406.4L1078.4 415.5L1080.1 408.2L1081.5 412.3L1082.5 406.8L1083.9 417.6L1085.6 415.7L1087.0 419.8L1088.3 416.0L1090.0 423.6L1091.3 419.9L1092.8 425.8L1093.9 419.3L1094.9 427.2L1096.1 426.5L1097.4 441.8L1098.8 443.0L1100.4 445.8L1101.8 444.5L1103.0 451.0L1104.3 449.1L1105.7 456.3L1106.8 454.6L1108.3 462.1L1109.7 457.2L1111.2 467.9L1112.4 461.8L1114.1 471.7L1115.3 466.7L1117.0 471.9L1118.8 468.8L1120.0 476.3L1121.5 471.7L1122.6 475.9L1124.0 470.3L1125.1 479.2L1126.6 479.4L1127.8 485.3L1129.5 479.5L1130.6 486.4L1132.2 480.5L1133.7 484.1L1134.8 482.4L1135.8 486.6L1137.2 480.9L1138.4 482.7L1139.5 474.9L1141.3 480.2L1142.4 474.7L1144.1 478.8L1145.8 474.4L1147.1 476.7L1148.5 469.1L1149.5 475.5L1151.2 472.8L1152.5 479.3L1153.8 475.6L1155.0 479.0L1156.0 471.6L1157.6 478.8L1159.3 473.1L1160.6 480.5L1162.1 473.9L1163.7 479.5L1165.4 473.4L1167.0 485.1L1168.4 480.5L1170.1 491.4L1171.7 483.8L1173.0 490.8" stroke="#00ffff" stroke-width="1" fill="none" stroke-linejoin="round"/><path d="M65 514.5H1174" stroke="#ffff00" stroke-width="1"/></svg>
<div class="t ax" style="left:20px;top:125.5px;width:38.5px;text-align:right">-20.0</div>
<div class="t ax" style="left:20px;top:179.5px;width:38.5px;text-align:right">-30.0</div>
<div class="t ax" style="left:20px;top:234.5px;width:38.5px;text-align:right">-40.0</div>
<div class="t ax" style="left:20px;top:289.5px;width:38.5px;text-align:right">-50.0</div>
<div class="t ax" style="left:20px;top:343.5px;width:38.5px;text-align:right">-60.0</div>
<div class="t ax" style="left:20px;top:398.5px;width:38.5px;text-align:right">-70.0</div>
<div class="t ax" style="left:20px;top:453.5px;width:38.5px;text-align:right">-80.0</div>
<div class="t ax" style="left:20px;top:507.5px;width:38.5px;text-align:right">-90.0</div>
<div class="t ax" style="left:465px;top:115px;width:310px;text-align:center">Left Channel</div>
<div class="t ax" style="left:17.5px;top:329.5px;width:0;height:0"><div style="position:absolute;white-space:nowrap;transform:translate(-50%,-50%) rotate(-90deg);font-size:13.2px;letter-spacing:0.05px">Relative Amplitude (dB)</div></div>
<div class="a" style="left:63px;top:533px;width:1112px;height:2px;background:#808080"></div>
<div class="a" style="left:63px;top:533px;width:2px;height:403px;background:#808080"></div>
<div class="a" style="left:1175px;top:534px;width:1px;height:384px;background:#f8f8f0"></div>
<div class="a" style="left:65px;top:918px;width:1110px;height:1px;background:#f4f4f4"></div>
<svg class="a" style="left:65px;top:535px" width="1110" height="383" viewBox="65 535 1110 383" shape-rendering="crispEdges"><rect x="65" y="535" width="1110" height="383" fill="#000"/><path d="M127.5 535V917M188.5 535V917M231.5 535V917M264.5 535V917M291.5 535V917M315.5 535V917M335.5 535V917M352.5 535V917M368.5 535V917M472.5 535V917M532.5 535V917M576.5 535V917M609.5 535V917M636.5 535V917M659.5 535V917M679.5 535V917M697.5 535V917M713.5 535V917M817.5 535V917M877.5 535V917M920.5 535V917M954.5 535V917M981.5 535V917M1004.5 535V917M1024.5 535V917M1042.5 535V917M1058.5 535V917M1161.5 535V917M65 535.5H1175M65 589.5H1175M65 644.5H1175M65 699.5H1175M65 753.5H1175M65 808.5H1175M65 863.5H1175" stroke="#008000" stroke-width="1" fill="none"/><path d="M65.0 685.5L67.7 685.5L74.1 699.5L80.4 715.8L88.6 727.6L95.4 719.4L101.2 727.6L107.6 726.7L115.7 719.8L120.3 718.9L125.7 718.9L131.1 706.7L136.6 695.9L141.1 704.9L146.5 712.2L151.1 715.4L154.7 694.1L157.4 685.0L160.7 684.6L163.7 697.7L168.3 715.8L172.2 723.9L175.5 714.0L179.1 713.1L184.6 714.0L189.1 719.4L191.8 720.7L199.1 718.5L206.3 719.8L212.6 723.0L218.1 724.9L222.6 714.0L227.1 706.7L232.6 698.6L235.3 699.1L239.8 693.2L243.4 692.6L246.2 700.4L248.9 703.5L251.6 699.5L254.3 680.5L256.9 646.9L258.9 641.5L261.2 664.1L263.6 662.6L265.9 664.1L268.3 650.1L270.6 621.9L272.5 598.5L274.4 593.0L276.1 615.7L278.1 653.2L280.8 658.6L284.4 661.0L287.8 654.7L290.2 643.8L292.5 628.2L295.3 618.0L299.5 614.9L301.4 601.6L302.7 579.0L304.2 596.9L306.2 629.7L307.3 636.8L310.5 626.6L314.1 614.9L317.2 611.0L319.1 601.6L320.3 596.9L322.2 606.3L324.5 621.9L327.7 625.1L332.3 629.7L334.7 618.8L336.2 592.2L337.3 568.8L338.6 579.7L340.2 611.0L341.7 631.3L343.6 639.1L345.3 614.1L346.6 575.8L348.0 586.0L349.5 618.8L350.6 650.1L351.6 659.4L353.8 650.1L356.6 645.4L360.0 641.5L362.0 615.7L363.6 571.9L364.8 576.6L366.2 600.1L367.8 631.3L369.4 657.9L371.4 670.4L373.8 661.0L375.3 657.9L377.2 642.2L379.2 625.1L381.2 603.2L382.7 576.6L383.9 601.6L385.5 643.8L387.0 675.1L387.8 679.7L390.2 670.4L392.5 667.2L394.1 668.8L396.4 657.9L398.4 637.6L400.3 610.2L401.6 642.2L403.4 665.7L405.3 650.1L406.6 615.7L408.4 587.6L409.7 615.7L411.2 656.3L412.5 675.1L414.1 698.5L415.9 686.0L417.5 700.1L419.4 687.6L421.4 665.7L423.0 634.4L424.5 592.2L426.1 579.7L427.2 618.8L428.1 659.4L429.7 665.7L431.6 661.0L433.6 671.9L435.5 664.1L437.8 656.3L439.7 634.4L441.2 598.5L443.0 591.5L444.4 606.3L445.9 639.1L447.2 650.1L448.8 618.8L450.6 596.9L451.9 590.7L453.4 603.2L455.6 637.6L458.3 643.8L461.4 646.9L464.1 650.1L466.6 640.7L468.1 612.6L469.2 596.9L470.8 614.1L471.9 606.3L472.8 657.9L474.7 661.0L476.2 650.1L478.1 639.1L479.7 656.3L481.7 665.7L484.1 653.2L485.3 618.8L486.4 603.2L488.0 623.5L489.5 676.6L491.6 679.7L493.4 687.6L494.7 662.6L496.2 675.1L498.4 696.9L500.5 684.4L502.5 662.6L503.8 620.4L505.0 631.3L506.2 665.7L508.3 656.3L510.3 634.4L511.4 615.7L512.7 588.3L513.8 609.4L515.0 640.7L516.1 662.6L517.7 678.2L519.7 665.7L521.6 675.1L523.1 662.6L525.5 656.3L527.0 637.6L528.6 615.7L529.7 589.9L530.9 621.9L532.2 657.9L533.8 670.4L536.4 676.6L538.8 678.2L540.6 675.1L542.7 662.6L544.2 648.5L545.8 628.2L547.3 605.5L548.6 623.5L550.0 654.7L552.0 659.4L554.1 653.2L555.6 619.6L556.9 650.1L557.8 673.5L559.8 681.3L561.9 686.0L563.8 675.1L565.6 689.1L567.7 686.0L569.7 656.3L571.2 656.3L572.5 600.8L573.9 637.6L575.0 668.8L577.0 678.2L578.6 679.7L580.2 656.3L581.6 615.7L582.8 650.1L584.8 668.8L586.4 668.8L588.0 646.9L589.1 618.8L590.3 580.5L591.9 609.4L593.1 650.1L594.2 678.2L595.8 698.5L597.8 678.2L598.9 656.3L600.5 696.9L602.8 693.8L604.7 689.1L606.2 664.1L607.5 628.2L608.8 656.3L609.8 671.9L611.9 653.2L613.8 646.9L615.3 632.9L616.6 607.9L617.7 634.4L619.2 653.2L621.6 643.8L623.6 659.4L626.2 650.1L628.6 645.4L630.9 629.7L632.5 607.9L633.6 596.9L634.8 618.8L636.4 616.5L638.0 640.7L640.3 656.3L642.7 668.8L645.2 663.5L647.2 657.2L649.1 641.6L650.3 611.9L651.9 635.4L653.4 665.1L654.5 683.8L656.6 688.5L658.1 633.8L659.4 600.2L660.3 643.2L661.6 677.6L663.9 686.9L665.5 701.0L667.3 693.2L668.6 666.6L670.2 682.2L672.2 680.7L673.8 661.9L675.3 643.2L676.4 601.8L677.7 627.6L679.1 658.8L681.1 676.0L682.7 688.5L684.2 680.7L685.3 636.9L686.2 683.8L687.3 697.9L688.9 686.9L690.9 671.3L692.5 649.4L693.4 599.4L694.8 632.2L695.9 658.8L697.5 671.3L699.4 665.1L700.6 680.7L702.5 690.1L704.5 685.4L706.6 677.6L708.4 658.8L710.3 643.2L711.6 626.0L712.7 622.9L713.9 649.4L715.5 665.1L716.6 679.1L718.6 661.9L720.5 640.1L721.7 658.8L723.3 677.6L725.3 688.5L727.2 672.9L728.3 680.7L729.5 683.8L731.1 669.7L732.7 658.8L735.0 655.7L736.6 633.8L738.1 644.7L739.4 661.9L740.9 671.3L742.8 680.7L744.4 693.2L746.2 697.9L747.8 702.6L749.8 683.8L752.2 674.4L754.1 655.7L755.3 643.2L756.6 665.1L758.1 690.1L759.2 704.1L760.8 711.9L762.3 710.4L764.4 691.6L765.5 707.2L767.5 691.6L769.4 679.1L771.6 667.4L773.3 683.8L775.6 696.3L777.5 693.2L779.5 680.7L780.6 672.9L782.7 679.1L784.7 683.8L786.2 699.4L787.8 697.9L788.9 688.5L790.9 705.7L792.8 693.2L795.2 676.0L797.5 655.7L799.1 671.3L801.4 686.9L803.8 702.6L805.3 686.9L806.9 705.7L808.4 711.9L810.3 697.9L811.6 691.6L813.1 699.4L814.7 686.9L815.9 660.4L817.0 683.8L818.6 704.1L820.6 691.6L822.2 682.2L823.3 702.6L824.5 679.9L825.9 683.8L826.0 694.2L827.8 705.4L828.8 723.4L830.2 720.0L831.3 712.9L832.6 708.0L834.0 723.2L835.1 711.0L836.4 706.1L838.0 693.5L839.0 707.2L840.5 682.3L842.0 682.3L843.3 683.2L844.6 703.0L846.1 710.5L847.2 721.6L848.8 706.9L850.1 711.6L851.3 728.4L852.5 741.8L853.7 730.1L854.7 722.3L856.0 708.5L857.6 699.8L858.9 688.6L860.2 699.4L861.6 701.8L862.7 714.0L864.3 707.2L865.4 722.5L867.2 701.9L868.9 719.1L870.7 715.9L872.1 713.9L873.7 713.8L875.5 713.7L877.2 705.9L879.0 719.6L880.3 716.9L881.6 725.3L882.7 722.1L883.8 727.1L885.6 709.0L886.7 702.6L887.8 718.8L889.5 727.4L890.8 724.8L892.1 736.3L893.9 725.5L895.6 745.5L896.9 741.6L898.6 745.1L899.8 741.1L901.1 731.2L902.5 703.5L904.2 718.4L905.7 726.1L907.1 730.3L908.3 723.1L909.4 741.2L910.8 749.8L912.3 762.9L913.7 758.5L914.7 755.7L916.3 741.7L917.2 742.3L918.4 726.2L919.9 731.6L921.1 734.2L922.7 749.6L924.0 745.4L925.8 747.0L926.9 739.9L928.6 738.2L930.3 723.1L931.8 725.9L932.9 726.3L934.5 740.1L936.1 735.8L937.7 743.6L939.4 730.1L940.8 725.8L942.4 717.8L943.6 726.1L944.8 726.8L946.4 740.7L948.0 743.4L949.5 745.2L951.0 738.2L952.7 734.4L954.1 729.3L955.8 753.0L957.2 752.1L959.0 761.7L960.2 755.9L961.7 760.3L963.4 755.7L964.7 765.4L965.9 765.0L967.2 774.7L968.7 770.1L970.0 778.3L971.3 767.5L972.8 771.6L974.1 766.6L975.7 772.1L977.1 757.3L978.7 767.4L980.0 770.7L981.4 770.4L982.7 763.6L984.2 769.9L985.6 764.3L987.2 762.5L988.9 765.3L990.6 775.4L992.3 776.3L993.3 784.3L995.0 777.7L996.5 778.8L997.6 771.5L999.4 779.3L1001.0 775.5L1002.6 779.8L1004.3 772.9L1005.7 781.6L1006.8 779.6L1008.4 782.9L1009.5 775.3L1010.9 774.8L1012.1 767.9L1013.1 770.3L1014.3 769.5L1015.3 778.5L1016.7 774.2L1018.4 779.1L1019.8 771.6L1021.3 771.8L1022.4 765.9L1023.9 772.1L1025.3 768.8L1026.5 773.1L1027.6 767.0L1028.9 768.7L1030.5 764.3L1031.7 770.0L1033.4 760.0L1034.5 762.6L1035.5 754.7L1036.9 758.1L1038.7 759.3L1039.7 766.5L1041.1 756.3L1042.5 758.2L1043.9 753.3L1044.9 761.6L1046.2 756.2L1047.5 763.5L1048.9 758.3L1049.9 765.7L1051.0 762.0L1052.1 768.5L1053.6 769.7L1055.0 778.3L1056.3 775.5L1057.6 780.9L1059.3 778.7L1061.0 785.9L1062.5 783.2L1064.0 787.9L1065.2 784.8L1066.4 786.4L1067.9 783.0L1069.0 785.5L1070.7 773.8L1071.8 781.2L1073.2 781.5L1074.5 791.2L1075.8 787.8L1077.0 794.2L1078.6 787.2L1079.9 794.7L1081.1 793.7L1082.7 797.1L1084.1 793.4L1085.6 802.8L1087.3 799.6L1088.9 810.2L1090.1 809.6L1091.9 814.4L1093.3 811.2L1094.9 822.6L1096.0 820.7L1097.4 826.0L1098.6 826.7L1100.2 836.7L1101.9 832.6L1103.6 842.1L1105.4 843.1L1106.9 852.8L1108.1 847.2L1109.6 858.0L1110.9 852.3L1112.1 858.8L1113.6 854.7L1115.1 864.1L1116.1 860.4L1117.3 864.4L1118.6 859.6L1119.9 865.0L1121.0 862.7L1122.5 869.8L1124.3 868.9L1125.8 878.4L1126.9 875.1L1128.2 882.0L1129.3 881.9L1130.6 886.5L1132.0 883.1L1133.0 891.1L1134.1 890.2L1135.4 894.1L1136.7 887.5L1137.8 887.1L1138.9 879.3L1140.1 871.8L1141.5 864.3L1143.0 890.9L1144.3 894.3L1146.1 900.4L1147.2 892.7L1148.7 899.4L1150.4 889.4L1152.1 897.8L1153.4 895.4L1154.9 902.2L1156.7 895.9L1158.0 900.8L1159.4 895.7L1160.7 902.8L1161.9 896.6L1163.1 902.0L1164.2 899.5L1165.7 906.5L1166.7 898.8L1168.2 905.7L1169.5 905.0L1171.3 910.9L1172.4 909.6L1173.7 913.6" stroke="#ff0000" stroke-width="1" fill="none" stroke-linejoin="round"/><path d="M65.0 684.6L67.7 684.6L74.1 695.9L80.4 707.6L86.7 706.4L94.0 709.5L101.2 719.1L108.5 709.5L114.8 704.4L120.3 704.4L126.6 714.0L132.0 695.9L136.6 690.4L142.0 690.8L146.2 696.2L151.1 668.7L155.6 654.2L160.5 640.3L163.7 654.2L166.8 683.2L170.1 715.8L172.8 729.9L175.5 704.9L178.2 686.8L180.9 678.7L184.6 676.8L188.2 684.1L191.8 697.7L194.5 706.7L199.1 710.7L206.3 715.4L213.6 716.7L219.0 719.4L224.4 706.7L228.9 698.6L232.6 694.4L235.3 695.0L239.8 689.5L243.4 688.6L246.2 697.7L248.9 700.4L251.6 695.9L254.3 677.8L255.0 672.2L256.9 645.6L258.9 640.2L261.2 662.8L263.6 661.2L265.9 662.8L268.3 648.8L270.6 620.6L272.5 597.2L274.4 591.7L276.1 614.4L278.1 651.9L280.8 657.3L284.4 659.7L287.8 653.4L290.2 642.5L292.5 626.9L295.3 616.7L299.5 613.6L301.4 600.3L302.7 577.7L304.2 595.6L306.2 628.4L307.3 635.5L310.5 625.3L314.1 613.6L317.2 609.7L319.1 600.3L320.3 595.6L322.2 605.0L324.5 620.6L327.7 623.8L332.3 628.4L334.7 617.5L336.2 590.9L337.3 567.5L338.6 578.4L340.2 609.7L341.7 630.0L343.6 637.8L345.3 612.8L346.6 574.5L348.0 584.7L349.5 617.5L350.6 648.8L351.6 658.1L353.8 648.8L356.6 644.1L360.0 640.2L362.0 614.4L363.6 570.6L364.8 575.3L366.2 598.8L367.8 630.0L369.4 656.6L371.4 669.1L373.8 659.7L375.3 656.6L377.2 640.9L379.2 623.8L381.2 601.9L382.7 575.3L383.9 600.3L385.5 642.5L387.0 673.8L387.8 678.4L390.2 669.1L392.5 665.9L394.1 667.5L396.4 656.6L398.4 636.2L400.3 608.9L401.6 640.9L403.4 664.4L405.3 648.8L406.6 614.4L408.4 586.2L409.7 614.4L411.2 655.0L412.5 673.8L414.1 697.2L415.9 684.7L417.5 698.8L419.4 686.2L421.4 664.4L423.0 633.1L424.5 590.9L426.1 578.4L427.2 617.5L428.1 658.1L429.7 664.4L431.6 659.7L433.6 670.6L435.5 662.8L437.8 655.0L439.7 633.1L441.2 597.2L443.0 590.2L444.4 605.0L445.9 637.8L447.2 648.8L448.8 617.5L450.6 595.6L451.9 589.4L453.4 601.9L455.6 636.2L458.3 642.5L461.4 645.6L464.1 648.8L466.6 639.4L468.1 611.2L469.2 595.6L470.8 612.8L471.9 605.0L472.8 656.6L474.7 659.7L476.2 648.8L478.1 637.8L479.7 655.0L481.7 664.4L484.1 651.9L485.3 617.5L486.4 601.9L488.0 622.2L489.5 675.3L491.6 678.4L493.4 686.2L494.7 661.2L496.2 673.8L498.4 695.6L500.5 683.1L502.5 661.2L503.8 619.1L505.0 630.0L506.2 664.4L508.3 655.0L510.3 633.1L511.4 614.4L512.7 587.0L513.8 608.1L515.0 639.4L516.1 661.2L517.7 676.9L519.7 664.4L521.6 673.8L523.1 661.2L525.5 655.0L527.0 636.2L528.6 614.4L529.7 588.6L530.9 620.6L532.2 656.6L533.8 669.1L536.4 675.3L538.8 676.9L540.6 673.8L542.7 661.2L544.2 647.2L545.8 626.9L547.3 604.2L548.6 622.2L550.0 653.4L552.0 658.1L554.1 651.9L555.6 618.3L556.9 648.8L557.8 672.2L559.8 680.0L561.9 684.7L563.8 673.8L565.6 687.8L567.7 684.7L569.7 655.0L571.2 655.0L572.5 599.5L573.9 636.2L575.0 667.5L577.0 676.9L578.6 678.4L580.2 655.0L581.6 614.4L582.8 648.8L584.8 667.5L586.4 667.5L588.0 645.6L589.1 617.5L590.3 579.2L591.9 608.1L593.1 648.8L594.2 676.9L595.8 697.2L597.8 676.9L598.9 655.0L600.5 695.6L602.8 692.5L604.7 687.8L606.2 662.8L607.5 626.9L608.8 655.0L609.8 670.6L611.9 651.9L613.8 645.6L615.3 631.6L616.6 606.6L617.7 633.1L619.2 651.9L621.6 642.5L623.6 658.1L626.2 648.8L628.6 644.1L630.9 628.4L632.5 606.6L633.6 595.6L634.8 617.5L636.4 615.2L638.0 639.4L640.3 655.0L642.7 667.5L645.2 662.2L647.2 655.9L649.1 640.3L650.3 610.6L651.9 634.1L653.4 663.8L654.5 682.5L656.6 687.2L658.1 632.5L659.4 598.9L660.3 641.9L661.6 676.2L663.9 685.6L665.5 699.7L667.3 691.9L668.6 665.3L670.2 680.9L672.2 679.4L673.8 660.6L675.3 641.9L676.4 600.5L677.7 626.2L679.1 657.5L681.1 674.7L682.7 687.2L684.2 679.4L685.3 635.6L686.2 682.5L687.3 696.6L688.9 685.6L690.9 670.0L692.5 648.1L693.4 598.1L694.8 630.9L695.9 657.5L697.5 670.0L699.4 663.8L700.6 679.4L702.5 688.8L704.5 684.1L706.6 676.2L708.4 657.5L710.3 641.9L711.6 624.7L712.7 621.6L713.9 648.1L715.5 663.8L716.6 677.8L718.6 660.6L720.5 638.8L721.7 657.5L723.3 676.2L725.3 687.2L727.2 671.6L728.3 679.4L729.5 682.5L731.1 668.4L732.7 657.5L735.0 654.4L736.6 632.5L738.1 643.4L739.4 660.6L740.9 670.0L742.8 679.4L744.4 691.9L746.2 696.6L747.8 701.2L749.8 682.5L752.2 673.1L754.1 654.4L755.3 641.9L756.6 663.8L758.1 688.8L759.2 702.8L760.8 710.6L762.3 709.1L764.4 690.3L765.5 705.9L767.5 690.3L769.4 677.8L771.6 666.1L773.3 682.5L775.6 695.0L777.5 691.9L779.5 679.4L780.6 671.6L782.7 677.8L784.7 682.5L786.2 698.1L787.8 696.6L788.9 687.2L790.9 704.4L792.8 691.9L795.2 674.7L797.5 654.4L799.1 670.0L801.4 685.6L803.8 701.2L805.3 685.6L806.9 704.4L808.4 710.6L810.3 696.6L811.6 690.3L813.1 698.1L814.7 685.6L815.9 659.1L817.0 682.5L818.6 702.8L820.6 690.3L822.2 680.9L823.3 701.2L824.5 678.6L825.9 682.5L826.0 692.9L827.8 704.1L828.8 722.1L830.2 718.7L831.3 711.6L832.6 706.7L834.0 721.9L835.1 709.7L836.4 704.8L838.0 692.2L839.0 705.9L840.5 681.0L842.0 681.0L843.3 681.9L844.6 701.7L846.1 709.2L847.2 720.3L848.8 705.6L850.1 710.3L851.3 727.1L852.5 740.5L853.7 728.8L854.7 721.0L856.0 707.2L857.6 698.5L858.9 687.3L860.2 698.1L861.6 700.5L862.7 712.7L864.3 705.9L865.4 721.2L867.2 700.6L868.9 717.8L870.7 714.6L872.1 712.6L873.7 712.5L875.5 712.4L877.2 704.6L879.0 718.3L880.3 715.6L881.6 724.0L882.7 720.8L883.8 725.8L885.6 707.7L886.7 701.3L887.8 717.5L889.5 726.1L890.8 723.5L892.1 735.0L893.9 724.2L895.6 744.2L896.9 740.3L898.6 743.8L899.8 739.8L901.1 729.9L902.5 702.2L904.2 717.1L905.7 724.8L907.1 729.0L908.3 721.8L909.4 739.9L910.8 748.5L912.3 761.6L913.7 757.2L914.7 754.4L916.3 740.4L918.0 740.8L919.5 730.3L920.9 738.8L921.9 739.1L923.3 754.0L924.8 749.0L926.2 746.3L927.9 733.6L929.6 745.7L931.0 731.3L932.5 734.3L933.8 737.7L935.1 743.2L936.8 742.0L938.1 746.5L939.8 733.9L941.2 733.6L942.5 729.8L943.6 734.2L945.3 736.1L946.4 746.6L947.5 746.4L948.8 750.5L950.1 739.6L951.3 755.8L952.8 738.0L954.4 743.0L955.7 751.5L957.4 760.2L959.0 764.7L960.5 769.3L961.6 758.3L963.1 765.9L964.9 765.2L966.0 777.2L967.5 776.4L969.1 783.8L970.7 784.4L972.3 783.5L973.8 777.0L975.0 781.9L976.1 767.9L977.3 777.4L978.5 782.5L979.9 787.8L981.3 776.8L982.8 791.8L984.5 775.6L986.3 773.3L988.0 770.1L989.3 787.1L991.0 789.7L992.3 788.0L993.9 786.8L995.1 792.6L996.1 784.1L997.5 790.7L999.0 789.5L1000.2 790.1L1001.7 781.3L1002.8 785.3L1004.3 779.3L1005.7 793.3L1007.1 789.2L1008.8 796.3L1010.3 783.6L1011.4 787.2L1012.7 777.9L1013.7 779.8L1015.0 778.7L1016.6 796.8L1018.2 786.6L1019.3 788.9L1020.4 782.5L1021.8 787.4L1022.9 782.8L1024.2 783.4L1025.8 778.9L1027.3 782.3L1028.7 774.5L1029.9 778.1L1031.7 773.4L1032.9 775.2L1034.3 766.3L1035.6 772.8L1036.6 762.9L1038.1 773.9L1039.2 768.0L1040.9 775.3L1042.0 766.0L1043.8 769.4L1045.5 767.8L1046.5 773.0L1048.1 765.0L1049.6 773.9L1050.8 769.7L1052.6 779.9L1054.3 780.1L1055.9 788.4L1057.0 782.6L1058.1 790.0L1059.2 786.8L1060.3 795.8L1061.3 787.6L1062.9 795.2L1064.3 787.8L1065.8 792.3L1067.5 788.6L1068.9 792.3L1070.7 786.8L1072.4 792.0L1073.6 789.7L1075.1 799.0L1076.3 791.8L1077.9 798.2L1079.0 795.1L1080.8 802.8L1082.1 798.5L1083.8 805.8L1085.2 802.4L1087.0 812.1L1088.6 809.9L1090.1 818.5L1091.7 810.8L1093.4 817.4L1094.8 816.7L1096.0 824.0L1097.8 822.2L1098.9 830.2L1100.2 827.5L1101.5 836.5L1103.0 835.3L1104.0 840.7L1105.8 836.6L1107.4 845.5L1108.8 844.9L1110.4 852.6L1111.5 847.1L1112.7 853.8L1114.1 843.6L1115.3 849.0L1116.7 848.4L1118.3 854.6L1119.8 851.4L1121.4 852.7L1123.1 835.6L1124.1 855.6L1125.8 860.3L1126.9 867.9L1128.5 862.0L1130.2 872.5L1131.8 865.4L1132.9 873.3L1134.3 871.2L1136.1 878.7L1137.5 863.6L1139.3 858.4L1140.9 862.2L1142.2 877.3L1143.3 876.4L1144.6 880.7L1145.7 876.7L1147.0 881.2L1148.6 870.0L1150.3 872.8L1151.4 870.0L1152.5 879.9L1153.9 872.6L1155.1 878.9L1156.6 873.9L1157.8 881.5L1159.6 872.9L1161.3 881.6L1162.5 873.3L1164.1 880.7L1165.3 874.1L1166.8 880.7L1167.8 874.9L1169.1 883.2L1170.2 880.6L1171.3 884.7L1172.6 880.1L1173.9 886.0" stroke="#00ffff" stroke-width="1" fill="none" stroke-linejoin="round"/><path d="M65 917.5H1174" stroke="#ffff00" stroke-width="1"/></svg>
<div class="t ax" style="left:20px;top:528.5px;width:38.5px;text-align:right">-20.0</div>
<div class="t ax" style="left:20px;top:582.5px;width:38.5px;text-align:right">-30.0</div>
<div class="t ax" style="left:20px;top:637.5px;width:38.5px;text-align:right">-40.0</div>
<div class="t ax" style="left:20px;top:692.5px;width:38.5px;text-align:right">-50.0</div>
<div class="t ax" style="left:20px;top:746.5px;width:38.5px;text-align:right">-60.0</div>
<div class="t ax" style="left:20px;top:801.5px;width:38.5px;text-align:right">-70.0</div>
<div class="t ax" style="left:20px;top:856.5px;width:38.5px;text-align:right">-80.0</div>
<div class="t ax" style="left:20px;top:910.5px;width:38.5px;text-align:right">-90.0</div>
<div class="t ax" style="left:465px;top:518px;width:310px;text-align:center">Right Channel</div>
<div class="t ax" style="left:17.5px;top:732.5px;width:0;height:0"><div style="position:absolute;white-space:nowrap;transform:translate(-50%,-50%) rotate(-90deg);font-size:13.2px;letter-spacing:0.05px">Relative Amplitude (dB)</div></div>
<svg class="a" style="left:1131px;top:134px" width="42" height="24"><rect x="0" y="0" width="42" height="24" fill="#000"/><text x="2.5" y="12" font-family="Liberation Sans, sans-serif" font-weight="bold" font-size="12.5" fill="#fff" stroke="#fff" stroke-width="0.7" textLength="10.5" lengthAdjust="spacingAndGlyphs">S</text><text x="3" y="21" font-family="Liberation Sans, sans-serif" font-weight="bold" font-size="11" fill="#fff" stroke="#fff" stroke-width="0.6" textLength="10" lengthAdjust="spacingAndGlyphs">T</text><path d="M16 12.500H39M16 12.500L20.800 4H23L31.500 20.500H33.500L38.500 12.500" stroke="#fff" stroke-width="1" fill="none"/></svg>
<div class="a" style="left:65px;top:918px;width:1110px;height:16px;background:repeating-conic-gradient(#ffffff 0% 25%, #ece9d8 0% 50%) 0 0/2px 2px"></div>
<div class="a" style="left:65px;top:918px;width:17px;height:16px;background:#ECE9D8;box-shadow:inset 1px 1px 0 #fff, inset -1px -1px 0 #716f64, inset -2px -2px 0 #aca899"><svg width="17" height="16" style="position:absolute;left:0;top:0"><path d="M10.0 4.0V12.0L6.0 8.0Z" fill="#000"/></svg></div>
<div class="a" style="left:89px;top:918px;width:17px;height:16px;background:#ECE9D8;box-shadow:inset 1px 1px 0 #fff, inset -1px -1px 0 #716f64, inset -2px -2px 0 #aca899"></div>
<div class="a" style="left:1158px;top:918px;width:17px;height:16px;background:#ECE9D8;box-shadow:inset 1px 1px 0 #fff, inset -1px -1px 0 #716f64, inset -2px -2px 0 #aca899"><svg width="17" height="16" style="position:absolute;left:0;top:0"><path d="M7.0 4.0V12.0L11.0 8.0Z" fill="#000"/></svg></div>
<div class="a" style="left:65px;top:934px;width:1110px;height:2px;background:#f0f0f0"></div>
<div class="a" style="left:127px;top:934px;width:1px;height:3px;background:#000"></div>
<div class="t ax" style="left:97px;top:938px;width:61px;text-align:center">20</div>
<div class="a" style="left:188px;top:934px;width:1px;height:3px;background:#000"></div>
<div class="t ax" style="left:158px;top:938px;width:61px;text-align:center">30</div>
<div class="a" style="left:231px;top:934px;width:1px;height:3px;background:#000"></div>
<div class="t ax" style="left:201px;top:938px;width:61px;text-align:center">40</div>
<div class="a" style="left:264px;top:934px;width:1px;height:3px;background:#000"></div>
<div class="a" style="left:291px;top:934px;width:1px;height:3px;background:#000"></div>
<div class="t ax" style="left:261px;top:938px;width:61px;text-align:center">60</div>
<div class="a" style="left:315px;top:934px;width:1px;height:3px;background:#000"></div>
<div class="a" style="left:335px;top:934px;width:1px;height:3px;background:#000"></div>
<div class="t ax" style="left:305px;top:938px;width:61px;text-align:center">80</div>
<div class="a" style="left:352px;top:934px;width:1px;height:3px;background:#000"></div>
<div class="a" style="left:368px;top:934px;width:1px;height:3px;background:#000"></div>
<div class="t ax" style="left:338px;top:938px;width:61px;text-align:center">100</div>
<div class="a" style="left:472px;top:934px;width:1px;height:3px;background:#000"></div>
<div class="t ax" style="left:442px;top:938px;width:61px;text-align:center">200</div>
<div class="a" style="left:532px;top:934px;width:1px;height:3px;background:#000"></div>
<div class="t ax" style="left:502px;top:938px;width:61px;text-align:center">300</div>
<div class="a" style="left:576px;top:934px;width:1px;height:3px;background:#000"></div>
<div class="t ax" style="left:546px;top:938px;width:61px;text-align:center">400</div>
<div class="a" style="left:609px;top:934px;width:1px;height:3px;background:#000"></div>
<div class="a" style="left:636px;top:934px;width:1px;height:3px;background:#000"></div>
<div class="t ax" style="left:606px;top:938px;width:61px;text-align:center">600</div>
<div class="a" style="left:659px;top:934px;width:1px;height:3px;background:#000"></div>
<div class="a" style="left:679px;top:934px;width:1px;height:3px;background:#000"></div>
<div class="t ax" style="left:649px;top:938px;width:61px;text-align:center">800</div>
<div class="a" style="left:697px;top:934px;width:1px;height:3px;background:#000"></div>
<div class="a" style="left:713px;top:934px;width:1px;height:3px;background:#000"></div>
<div class="t ax" style="left:683px;top:938px;width:61px;text-align:center">1.0k</div>
<div class="a" style="left:817px;top:934px;width:1px;height:3px;background:#000"></div>
<div class="t ax" style="left:787px;top:938px;width:61px;text-align:center">2.0k</div>
<div class="a" style="left:877px;top:934px;width:1px;height:3px;background:#000"></div>
<div class="t ax" style="left:847px;top:938px;width:61px;text-align:center">3.0k</div>
<div class="a" style="left:920px;top:934px;width:1px;height:3px;background:#000"></div>
<div class="t ax" style="left:890px;top:938px;width:61px;text-align:center">4.0k</div>
<div class="a" style="left:954px;top:934px;width:1px;height:3px;background:#000"></div>
<div class="a" style="left:981px;top:934px;width:1px;height:3px;background:#000"></div>
<div class="t ax" style="left:951px;top:938px;width:61px;text-align:center">6.0k</div>
<div class="a" style="left:1004px;top:934px;width:1px;height:3px;background:#000"></div>
<div class="a" style="left:1024px;top:934px;width:1px;height:3px;background:#000"></div>
<div class="t ax" style="left:994px;top:938px;width:61px;text-align:center">8.0k</div>
<div class="a" style="left:1042px;top:934px;width:1px;height:3px;background:#000"></div>
<div class="a" style="left:1058px;top:934px;width:1px;height:3px;background:#000"></div>
<div class="t ax" style="left:1028px;top:938px;width:61px;text-align:center">10.0k</div>
<div class="a" style="left:1161px;top:934px;width:1px;height:3px;background:#000"></div>
<div class="t ax" style="left:1131px;top:938px;width:61px;text-align:center">20.0k</div>
<div class="t ax" style="left:601px;top:950px;font-size:12px">Frequency (Hz)</div>
<div class="t ax" style="left:1203.5px;top:118px;font-size:11.7px"><u>Overlays</u></div>
<div class="t ax" style="left:1189.5px;top:150px;width:0;height:0"><div style="position:absolute;white-space:nowrap;transform-origin:0 50%;transform:translate(0,-50%) rotate(-90deg);">Set</div></div>
<div class="t ax" style="left:1204.5px;top:150px;width:0;height:0"><div style="position:absolute;white-space:nowrap;transform-origin:0 50%;transform:translate(0,-50%) rotate(-90deg);">On</div></div>
<div class="a" style="left:1182px;top:153px;width:14px;height:14px;background:#ECE9D8;box-shadow:inset 1px 1px 0 #fff, inset -1px -1px 0 #716f64, inset -2px -2px 0 #aca899"><div class="t ax" style="left:0;top:0px;width:13px;text-align:center">1</div></div>
<div class="a" style="left:1199px;top:154px;width:13px;height:13px;background:#fff;box-shadow:inset 1px 1px 0 #aca899, inset -1px -1px 0 #fff, inset 2px 2px 0 #716f64, inset -2px -2px 0 #fff"><svg width="13" height="13" style="position:absolute;left:0;top:0"><path d="M3 5.500L5.500 8L10 3.500" stroke="#000" stroke-width="2" fill="none"/></svg></div>
<div class="t ax" style="left:1215.5px;top:153.5px;color:#ff0000;font-size:11.4px">Overlay 1</div>
<div class="a" style="left:1182px;top:169px;width:14px;height:14px;background:#ECE9D8;box-shadow:inset 1px 1px 0 #fff, inset -1px -1px 0 #716f64, inset -2px -2px 0 #aca899"><div class="t ax" style="left:0;top:0px;width:13px;text-align:center">2</div></div>
<div class="a" style="left:1199px;top:170px;width:13px;height:13px;background:#fff;box-shadow:inset 1px 1px 0 #aca899, inset -1px -1px 0 #fff, inset 2px 2px 0 #716f64, inset -2px -2px 0 #fff"><svg width="13" height="13" style="position:absolute;left:0;top:0"></svg></div>
<div class="t ax" style="left:1215.5px;top:169.5px;color:#ff00ff;font-size:11.4px">Overlay 2</div>
<div class="a" style="left:1182px;top:185px;width:14px;height:14px;background:#ECE9D8;box-shadow:inset 1px 1px 0 #fff, inset -1px -1px 0 #716f64, inset -2px -2px 0 #aca899"><div class="t ax" style="left:0;top:0px;width:13px;text-align:center">3</div></div>
<div class="a" style="left:1199px;top:186px;width:13px;height:13px;background:#fff;box-shadow:inset 1px 1px 0 #aca899, inset -1px -1px 0 #fff, inset 2px 2px 0 #716f64, inset -2px -2px 0 #fff"><svg width="13" height="13" style="position:absolute;left:0;top:0"></svg></div>
<div class="t ax" style="left:1215.5px;top:185.5px;color:#0000ff;font-size:11.4px">Overlay 3</div>
<div class="a" style="left:1182px;top:201px;width:14px;height:14px;background:#ECE9D8;box-shadow:inset 1px 1px 0 #fff, inset -1px -1px 0 #716f64, inset -2px -2px 0 #aca899"><div class="t ax" style="left:0;top:0px;width:13px;text-align:center">4</div></div>
<div class="a" style="left:1199px;top:202px;width:13px;height:13px;background:#fff;box-shadow:inset 1px 1px 0 #aca899, inset -1px -1px 0 #fff, inset 2px 2px 0 #716f64, inset -2px -2px 0 #fff"><svg width="13" height="13" style="position:absolute;left:0;top:0"><path d="M3 5.500L5.500 8L10 3.500" stroke="#000" stroke-width="2" fill="none"/></svg></div>
<div class="t ax" style="left:1215.5px;top:201.5px;color:#00ffff;font-size:11.4px">Overlay 4</div>
<div class="a" style="left:1180px;top:218px;width:63px;height:17px;background:#ECE9D8;box-shadow:inset 1px 1px 0 #fff, inset -1px -1px 0 #716f64, inset -2px -2px 0 #aca899"><div class="t ax" style="left:0;top:2px;width:62px;text-align:center">Options...</div></div>
<div class="t ax" style="left:1189.5px;top:553px;width:0;height:0"><div style="position:absolute;white-space:nowrap;transform-origin:0 50%;transform:translate(0,-50%) rotate(-90deg);">Set</div></div>
<div class="t ax" style="left:1204.5px;top:553px;width:0;height:0"><div style="position:absolute;white-space:nowrap;transform-origin:0 50%;transform:translate(0,-50%) rotate(-90deg);">On</div></div>
<div class="a" style="left:1182px;top:556px;width:14px;height:14px;background:#ECE9D8;box-shadow:inset 1px 1px 0 #fff, inset -1px -1px 0 #716f64, inset -2px -2px 0 #aca899"><div class="t ax" style="left:0;top:0px;width:13px;text-align:center">1</div></div>
<div class="a" style="left:1199px;top:557px;width:13px;height:13px;background:#fff;box-shadow:inset 1px 1px 0 #aca899, inset -1px -1px 0 #fff, inset 2px 2px 0 #716f64, inset -2px -2px 0 #fff"><svg width="13" height="13" style="position:absolute;left:0;top:0"><path d="M3 5.500L5.500 8L10 3.500" stroke="#000" stroke-width="2" fill="none"/></svg></div>
<div class="t ax" style="left:1215.5px;top:556.5px;color:#ff0000;font-size:11.4px">Overlay 1</div>
<div class="a" style="left:1182px;top:572px;width:14px;height:14px;background:#ECE9D8;box-shadow:inset 1px 1px 0 #fff, inset -1px -1px 0 #716f64, inset -2px -2px 0 #aca899"><div class="t ax" style="left:0;top:0px;width:13px;text-align:center">2</div></div>
<div class="a" style="left:1199px;top:573px;width:13px;height:13px;background:#fff;box-shadow:inset 1px 1px 0 #aca899, inset -1px -1px 0 #fff, inset 2px 2px 0 #716f64, inset -2px -2px 0 #fff"><svg width="13" height="13" style="position:absolute;left:0;top:0"></svg></div>
<div class="t ax" style="left:1215.5px;top:572.5px;color:#ff00ff;font-size:11.4px">Overlay 2</div>
<div class="a" style="left:1182px;top:588px;width:14px;height:14px;background:#ECE9D8;box-shadow:inset 1px 1px 0 #fff, inset -1px -1px 0 #716f64, inset -2px -2px 0 #aca899"><div class="t ax" style="left:0;top:0px;width:13px;text-align:center">3</div></div>
<div class="a" style="left:1199px;top:589px;width:13px;height:13px;background:#fff;box-shadow:inset 1px 1px 0 #aca899, inset -1px -1px 0 #fff, inset 2px 2px 0 #716f64, inset -2px -2px 0 #fff"><svg width="13" height="13" style="position:absolute;left:0;top:0"></svg></div>
<div class="t ax" style="left:1215.5px;top:588.5px;color:#0000ff;font-size:11.4px">Overlay 3</div>
<div class="a" style="left:1182px;top:604px;width:14px;height:14px;background:#ECE9D8;box-shadow:inset 1px 1px 0 #fff, inset -1px -1px 0 #716f64, inset -2px -2px 0 #aca899"><div class="t ax" style="left:0;top:0px;width:13px;text-align:center">4</div><div class="a" style="left:2px;top:3px;width:9px;height:8px;border:1px dotted #000"></div></div>
<div class="a" style="left:1199px;top:605px;width:13px;height:13px;background:#fff;box-shadow:inset 1px 1px 0 #aca899, inset -1px -1px 0 #fff, inset 2px 2px 0 #716f64, inset -2px -2px 0 #fff"><svg width="13" height="13" style="position:absolute;left:0;top:0"><path d="M3 5.500L5.500 8L10 3.500" stroke="#000" stroke-width="2" fill="none"/></svg></div>
<div class="t ax" style="left:1215.5px;top:604.5px;color:#00ffff;font-size:11.4px">Overlay 4</div>
<div class="a" style="left:1180px;top:621px;width:63px;height:17px;background:#ECE9D8;box-shadow:inset 1px 1px 0 #fff, inset -1px -1px 0 #716f64, inset -2px -2px 0 #aca899"><div class="t ax" style="left:0;top:2px;width:62px;text-align:center">Options...</div></div>
<div class="a" style="left:8px;top:968px;width:118px;height:17px;box-shadow:inset 1px 1px 0 #9d9da1, inset -1px -1px 0 #fff"><div class="t ax" style="left:4px;top:2px">Stopped</div></div>
<div class="a" style="left:128px;top:968px;width:101px;height:17px;box-shadow:inset 1px 1px 0 #9d9da1, inset -1px -1px 0 #fff"><div class="t ax" style="left:4px;top:2px">Post Process</div></div>
<div class="a" style="left:231px;top:968px;width:71px;height:17px;box-shadow:inset 1px 1px 0 #9d9da1, inset -1px -1px 0 #fff"><div class="t ax" style="left:4px;top:2px">48000 Hz</div></div>
<div class="a" style="left:304px;top:968px;width:51px;height:17px;box-shadow:inset 1px 1px 0 #9d9da1, inset -1px -1px 0 #fff"><div class="t ax" style="left:4px;top:2px">24 Bit</div></div>
<div class="a" style="left:357px;top:968px;width:61px;height:17px;box-shadow:inset 1px 1px 0 #9d9da1, inset -1px -1px 0 #fff"><div class="t ax" style="left:4px;top:2px">Stereo</div></div>
<div class="a" style="left:420px;top:968px;width:101px;height:17px;box-shadow:inset 1px 1px 0 #9d9da1, inset -1px -1px 0 #fff"><div class="t ax" style="left:4px;top:2px">FFT 65536 pts</div></div>
<div class="a" style="left:523px;top:968px;width:73px;height:17px;box-shadow:inset 1px 1px 0 #9d9da1, inset -1px -1px 0 #fff"><div class="t ax" style="left:4px;top:2px">Hanning</div></div>
</body></html>
